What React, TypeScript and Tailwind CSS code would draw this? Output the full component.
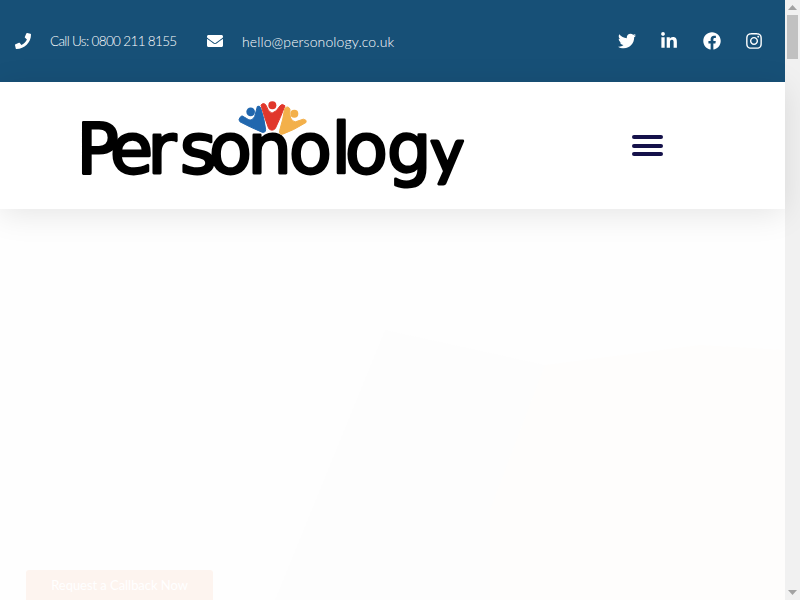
import { FaPhone, FaEnvelope, FaTwitter, FaLinkedinIn, FaFacebook, FaInstagram } from "react-icons/fa";

function Logo() {
  return (
    <svg viewBox="80 98 382 94" className="w-[382px] h-[94px] block overflow-visible">
      <text
        y="173"
        x="76.5 110 147.6 180 209 247.6 289 331.4 345 387"
        fontFamily="'DejaVu Sans', sans-serif"
        fontSize="70"
        fill="#000"
        stroke="#000"
        strokeWidth="2.8"
        strokeLinejoin="round"
      >
        Personolog
        <tspan x="431" fontFamily="Lato, sans-serif" fontSize="62" fontWeight="500">y</tspan>
      </text>
      <g transform="translate(230 96.5) scale(0.3333)" strokeWidth="3" strokeLinejoin="round">
        <circle cx="62" cy="46" r="13" fill="#2167ae" />
        <path d="M27 70 Q28 62 36 58 L50 66 Q64 78 74 60 L82 30 Q88 26 92 34 Q104 70 107 100 Q106 110 96 107 Q60 92 30 76 Z" fill="#2167ae" stroke="#2167ae" />
        <circle cx="127" cy="26" r="12" fill="#e1372b" />
        <path d="M93 26 Q100 16 108 26 Q114 46 126 50 Q140 46 150 28 Q156 20 165 28 Q152 62 136 96 Q126 106 116 96 Q102 60 93 26 Z" fill="#e1372b" stroke="#e1372b" />
        <circle cx="193" cy="52" r="12" fill="#f3b04a" />
        <path d="M164 36 Q174 26 180 38 Q176 72 196 76 L220 68 Q232 70 228 78 Q190 102 158 113 Q146 115 149 102 Q160 66 164 36 Z" fill="#f3b04a" stroke="#f3b04a" />
      </g>
    </svg>
  );
}

function ScrollArrow({ down }: { down?: boolean }) {
  return (
    <div className="h-[15px] flex items-center justify-center">
      <svg viewBox="0 0 9 5" className="w-[9px] h-[5px]">
        <polygon points={down ? "0,0 9,0 4.5,5" : "0,5 9,5 4.5,0"} fill="#a3a3a3" />
      </svg>
    </div>
  );
}

export default function App() {
  const text = "font-light text-white";
  return (
    <div className="h-[600px] w-[800px] overflow-hidden flex font-['Lato',sans-serif]">
      <div className="w-[785px] flex flex-col bg-[#fefefe]">
        <div className="h-[82px] shrink-0 bg-[#175077] flex items-center justify-between pl-[15px] pr-[22px]">
          <div className="flex items-center">
            <FaPhone className="text-white w-[16px] h-[16px]" />
            <span className={`${text} text-[13.5px] tracking-[-0.65px] ml-[19px] w-[157px]`}>Call Us: 0800 211 8155</span>
            <FaEnvelope className="text-white w-[16px] h-[16px]" />
            <span className={`${text} text-[14px] tracking-[0.12px] ml-[19px]`}>hello@personology.co.uk</span>
          </div>
          <div className="flex items-center gap-[24.5px]">
            <FaTwitter className="text-white w-[18px] h-[18px]" />
            <FaLinkedinIn className="text-white w-[18px] h-[18px]" />
            <FaFacebook className="text-white w-[18px] h-[18px]" />
            <FaInstagram className="text-white w-[18px] h-[18px]" />
          </div>
        </div>
        <div className="relative z-10 h-[127px] shrink-0 bg-white shadow-[0_5px_30px_rgba(0,0,0,0.1)] flex items-start pl-[80px] pt-[16px]">
          <Logo />
          <div className="ml-[170px] mt-[37px] w-[31px] flex flex-col gap-[4.5px]">
            <div className="h-[4px] rounded-full bg-[#15114a]" />
            <div className="h-[4px] rounded-full bg-[#15114a]" />
            <div className="h-[4px] rounded-full bg-[#15114a]" />
          </div>
        </div>
        <div className="relative flex-1 overflow-hidden">
          <svg viewBox="0 209 785 391" className="absolute inset-0 w-full h-full">
            <polygon points="385,330 545,365 490,510 490,600 275,600" fill="#fdfdfd" />
            <polygon points="545,365 700,345 785,350 785,600 490,600 490,510" fill="#fefdfc" />
          </svg>
          <div className="absolute left-[26px] top-[361px] w-[187px] h-[60px] bg-[#fdf4ef] rounded-[3px] pt-[6px] text-center text-[13px] tracking-[-0.05px] text-white">
            Request a Callback Now
          </div>
        </div>
      </div>
      <div className="w-[15px] h-full bg-[#f1f1f1] flex flex-col">
        <ScrollArrow />
        <div className="h-[44px] mx-[2px] bg-[#c1c1c1]" />
        <div className="flex-1" />
        <ScrollArrow down />
      </div>
    </div>
  );
}
